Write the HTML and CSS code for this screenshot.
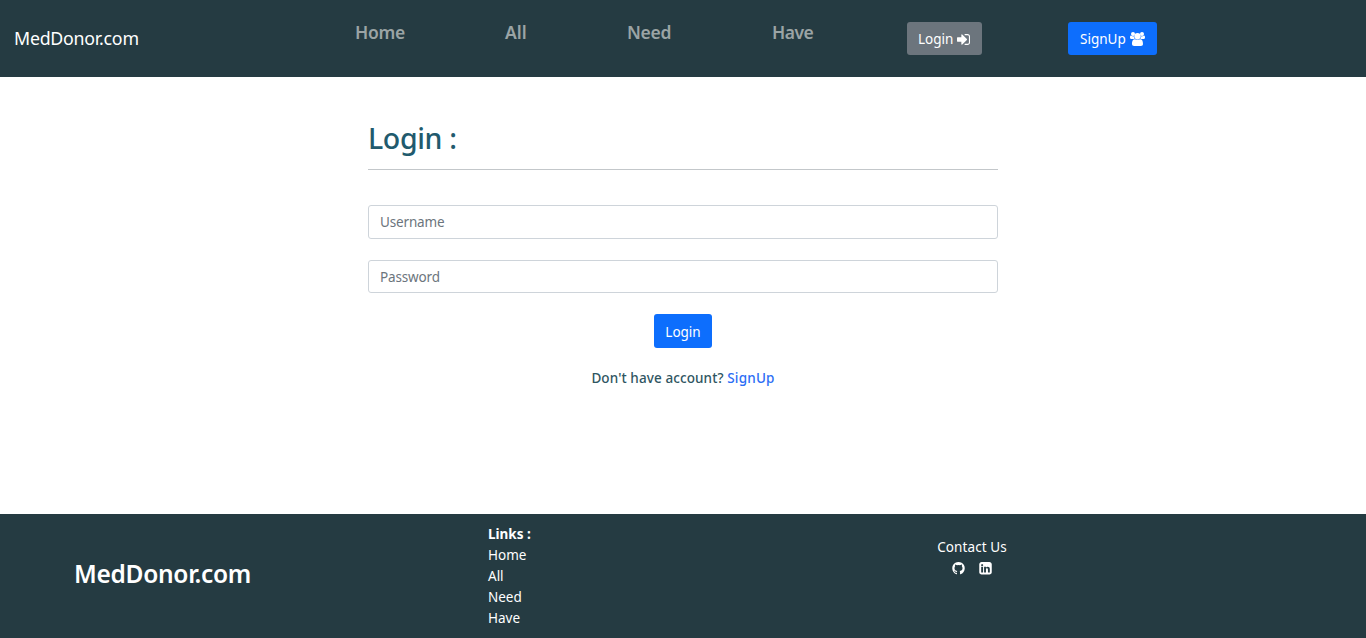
FILE: index.html
```html
<!DOCTYPE html>
<html lang="en">
<head>
<meta charset="utf-8">
<title>MedDonor.com</title>
<link rel="stylesheet" href="styles.css">
</head>
<body>
<header class="navbar">
  <a class="brand"><span>MedDonor.com</span></a>
  <nav class="nav-links">
    <a class="nav-home">Home</a>
    <a class="nav-all">All</a>
    <a class="nav-need">Need</a>
    <a class="nav-have">Have</a>
  </nav>
  <a class="btn btn-login"><span>Login</span>
    <svg class="icon-in" viewBox="128 256 1536 1280"><path d="M1312 896q0 26-19 45l-544 544q-19 19-45 19t-45-19-19-45v-288h-448q-26 0-45-19t-19-45v-384q0-26 19-45t45-19h448v-288q0-26 19-45t45-19 45 19l544 544q19 19 19 45zm352-352v704q0 119-84.500 203.500t-203.500 84.500h-320q-13 0-22.500-9.500t-9.500-22.500q0-4-1-20t-.5-26.500 3-23.500 10-19.500 20.500-6.500h320q66 0 113-47t47-113v-704q0-66-47-113t-113-47h-312l-11.500-1-11.500-3-8-5.500-7-9-2-13.500q0-4-1-20t-.5-26.500 3-23.500 10-19.500 20.500-6.500h320q119 0 203.500 84.500t84.500 203.500z"/></svg>
  </a>
  <a class="btn btn-signup"><span>SignUp</span>
    <svg class="icon-users" viewBox="0 0 30 28"><circle cx="6" cy="4" r="4"/><circle cx="24" cy="4" r="4"/><circle cx="15" cy="8.500" r="6.300"/><path d="M9.300 14.200H4.200C1.500 14.200 0 13 0 10.800 0 9 .2 6.800 2 6.800c.6 0 2.400 2 5 2l1.100-.2c0 2 .4 3.800 1.200 5.600zM20.700 14.200h5.100c2.700 0 4.200-1.200 4.200-3.400 0-1.800-.2-4-2-4-.6 0-2.400 2-5 2l-1.100-.2c0 2-.4 3.800-1.200 5.600zM8.200 28C5.600 28 4 26.500 4 24c0-3.800.8-9.500 5.200-9.500.8 0 2.800 1.200 5.800 1.200s5-1.200 5.800-1.200c4.400 0 5.200 5.700 5.200 9.500 0 2.500-1.600 4-4.200 4z"/></svg>
  </a>
</header>
<main class="login">
  <h1><span>Login :</span></h1>
  <form>
    <input class="username" type="text" placeholder="Username">
    <input class="password" type="password" placeholder="Password">
    <button class="submit" type="button">Login</button>
  </form>
  <p class="prompt"><span>Don't have account?</span> <a>SignUp</a></p>
</main>
<footer class="footer">
  <h2><span>MedDonor.com</span></h2>
  <div class="links">
    <b>Links :</b>
    <a>Home</a>
    <a>All</a>
    <a>Need</a>
    <a>Have</a>
  </div>
  <div class="contact">
    <span>Contact Us</span>
    <div class="social">
      <svg viewBox="128 128 1536 1536"><path d="M896 128q209 0 385.500 103t279.500 279.500 103 385.500q0 251-146.500 451.500t-378.500 277.500q-27 5-40-7t-13-30q0-3 .5-76.500t.5-134.500q0-97-52-142 57-6 102.500-18t94-39 81-66.500 53-105 20.500-150.500q0-119-79-206 37-91-8-204-28-9-81 11t-92 44l-38 24q-93-26-192-26t-192 26q-16-11-42.500-27t-83.500-38.500-85-13.500q-45 113-8 204-79 87-79 206 0 85 20.500 150t52.500 105 80.500 67 94 39 102.500 18q-39 36-49 103-21 10-45 15t-57 5-65.500-21.500-55.500-62.500q-19-32-48.500-52t-49.500-24l-20-3q-21 0-29 4.500t-5 11.500 9 14 13 12l7 5q22 10 43.500 38t31.500 51l10 23q13 38 44 61.500t67 30 69.500 7 55.500-3.500l23-4q0 38 .5 88.500t.5 54.500q0 18-13 30t-40 7q-232-77-378.500-277.500t-146.500-451.500q0-209 103-385.500t279.500-279.500 385.500-103z"/></svg>
      <svg viewBox="128 128 1536 1536"><path d="M365 1414h231v-694h-231v694zm246-908q-1-52-36-86t-93-34-94.500 34-36.500 86q0 51 35.500 85.500t92.500 34.500h1q59 0 95-34.500t36-85.500zm585 908h231v-398q0-154-73-233t-193-79q-136 0-209 117h2v-101h-231q3 66 0 694h231v-388q0-38 7-56 15-35 45-59.500t74-24.500q116 0 116 157v371zm468-998v960q0 119-84.500 203.500t-203.500 84.500h-960q-119 0-203.500-84.500t-84.500-203.500v-960q0-119 84.500-203.500t203.500-84.500h960q119 0 203.500 84.500t84.500 203.500z"/></svg>
    </div>
  </div>
</footer>
</body>
</html>
```
FILE: styles.css
```css
* { box-sizing: border-box; }
body {
  margin: 0;
  min-height: 638px;
  display: flex;
  flex-direction: column;
  overflow: hidden;
  background: #fff;
  font: 13.5px/21px "Segoe UI", "Noto Sans", sans-serif;
}
svg { fill: currentColor; display: block; }

.navbar {
  height: 77px;
  display: flex;
  align-items: flex-start;
  background: #253b42;
  color: #fff;
}
.brand { width: 355px; padding: 25px 0 0 14px; font-size: 17.8px; line-height: 27px; letter-spacing: -0.25px; }
.nav-links {
  width: 552px;
  display: flex;
  padding-top: 19px;
  color: #9ba4a5;
  font-size: 17.5px;
  font-weight: 600;
  line-height: 26px;
  letter-spacing: -0.3px;
}
.nav-home { width: 150px; }
.nav-all { width: 122px; letter-spacing: 0; }
.nav-need { width: 145px; }
.nav-have { letter-spacing: -0.5px; }
.btn {
  height: 33px;
  margin-top: 22px;
  padding: 1px 12px 0 12px;
  display: flex;
  align-items: center;
  justify-content: space-between;
  border-radius: 3px;
}
.btn-login { width: 75px; margin-right: 86px; padding-left: 11px; background: #6c757d; }
.btn-signup { width: 89px; background: #0d6efd; }
.icon-in { width: 13px; height: 11px; flex: none; }
.icon-users { width: 15px; height: 14px; flex: none; }

.login { width: 630px; margin: 0 auto; flex: 1; }
h1 {
  margin: 42px 0 35px;
  height: 51px;
  border-bottom: 1px solid #c3c7ca;
  color: #215a6d;
  font-size: 28.5px;
  font-weight: 500;
  line-height: 38px;
  letter-spacing: -0.35px;
}
form { display: flex; flex-direction: column; align-items: center; }
input {
  width: 100%;
  height: 34px;
  padding: 0 11px;
  border: 1px solid #ced4da;
  border-radius: 3px;
  background: #fff;
  font: inherit;
  letter-spacing: -0.15px;
}
input::placeholder { color: #6c757d; opacity: 1; }
.password { height: 33px; margin: 21px 0; }
.submit {
  width: 58px;
  height: 34px;
  padding: 2px 0 0;
  border: 0;
  border-radius: 3px;
  background: #0d6efd;
  color: #fff;
  font: inherit;
}
.prompt { margin: 20px 0 0; text-align: center; color: #305662; font-weight: 500; letter-spacing: 0.1px; }
.prompt a { color: #2b6df5; letter-spacing: 0.2px; }

.footer {
  height: 124px;
  display: flex;
  align-items: flex-start;
  background: #253b42;
  color: #fff;
}
h2 { width: 488px; margin: 0; padding: 43px 0 0 74px; font-size: 24.5px; font-weight: 600; line-height: 33px; letter-spacing: -0.3px; }
.links { width: 424px; padding-top: 10px; display: flex; flex-direction: column; }
.contact { width: 120px; padding-top: 23px; text-align: center; letter-spacing: 0.1px; }
.social { display: flex; justify-content: center; gap: 14px; padding-top: 4px; }
.social svg { width: 13px; height: 12.5px; }
```
